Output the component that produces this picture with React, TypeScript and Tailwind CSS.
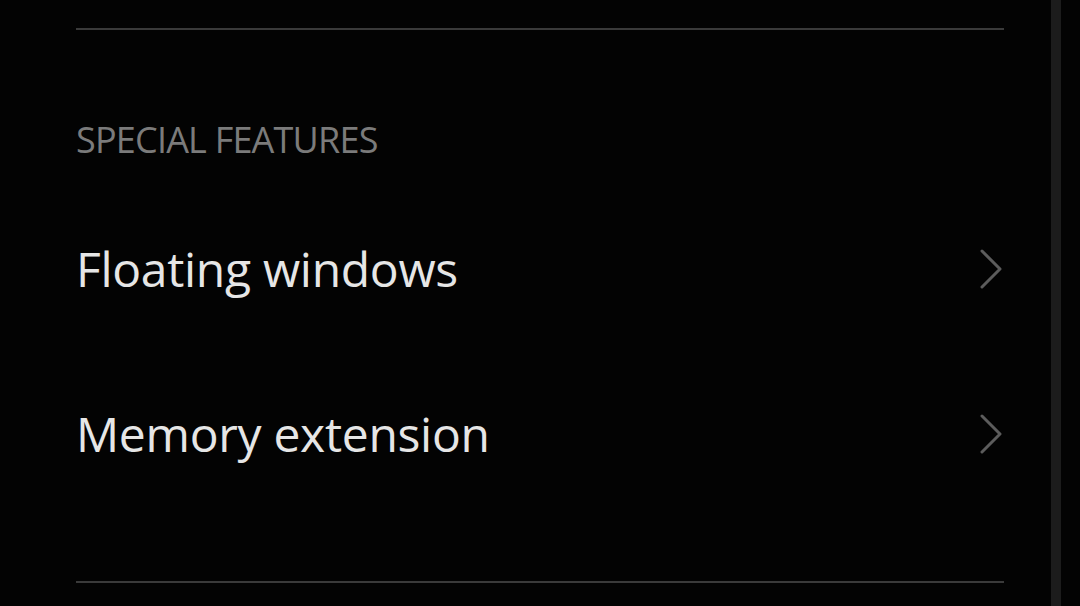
const rows = ["Floating windows", "Memory extension"];

function Chevron() {
  return (
    <svg width="22" height="40" viewBox="0 0 22 40" fill="none" aria-hidden>
      <polyline
        points="2,2 20,20 2,38"
        stroke="#5c5c5c"
        strokeWidth="3"
        strokeLinecap="round"
        strokeLinejoin="round"
      />
    </svg>
  );
}

export default function App() {
  return (
    <div
      className="flex h-[606px] w-[1080px] overflow-hidden bg-[#030303]"
      style={{ fontFamily: '"Open Sans", "Noto Sans", sans-serif' }}
    >
      <div className="flex w-[1051px] flex-col pl-[76px]">
        <div className="mt-[28px] h-[2px] w-[928px] bg-[#3a3a3a]" />

        <div className="mt-[92px] text-[36px] leading-[36px] tracking-[-0.8px] text-[#7b7b7b]">
          SPECIAL FEATURES
        </div>

        <div className="mt-[28px] flex w-[928px] flex-col">
          {rows.map((label) => (
            <div
              key={label}
              className="flex h-[165px] items-center justify-between pr-[2px]"
            >
              <span className="text-[48px] leading-[48px] tracking-[-0.3px] text-[#e6e6e6]">
                {label}
              </span>
              <Chevron />
            </div>
          ))}
        </div>

        <div className="mt-[65px] h-[2px] w-[928px] bg-[#3a3a3a]" />
      </div>

      <div className="h-full w-[10px] bg-[#1c1c1c]" />
    </div>
  );
}
